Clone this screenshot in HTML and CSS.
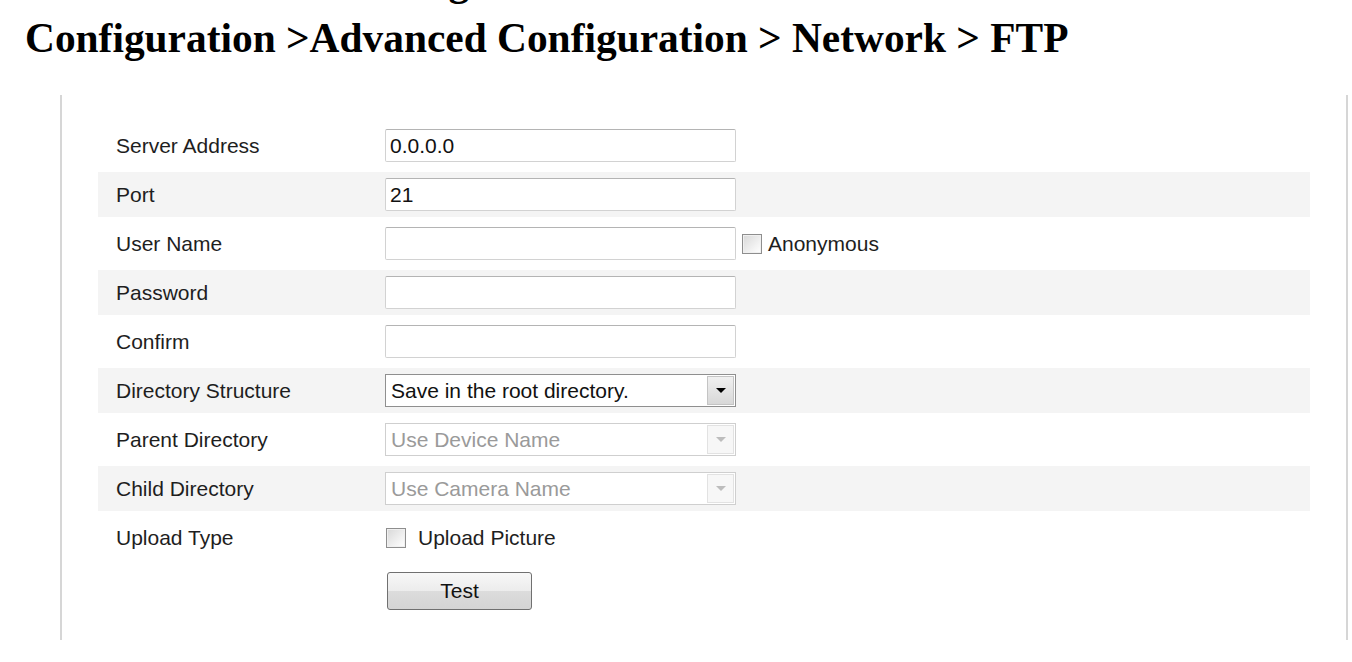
FILE: index.html
```html
<!DOCTYPE html>
<html>
<head>
<meta charset="utf-8">
<link rel="stylesheet" href="styles.css">
</head>
<body>
<div class="prev-line"><div class="prev-text">Setting</div></div>
<h1 class="crumb">Configuration &gt;Advanced Configuration &gt; Network &gt; FTP</h1>
<div class="panel">
  <div class="row">
    <div class="label">Server Address</div>
    <div class="field"><div class="input">0.0.0.0</div></div>
  </div>
  <div class="row alt">
    <div class="label">Port</div>
    <div class="field"><div class="input">21</div></div>
  </div>
  <div class="row">
    <div class="label">User Name</div>
    <div class="field">
      <div class="input"></div>
      <span class="check check-anon"></span>
      <span class="check-text">Anonymous</span>
    </div>
  </div>
  <div class="row alt">
    <div class="label">Password</div>
    <div class="field"><div class="input"></div></div>
  </div>
  <div class="row">
    <div class="label">Confirm</div>
    <div class="field"><div class="input"></div></div>
  </div>
  <div class="row alt">
    <div class="label">Directory Structure</div>
    <div class="field">
      <div class="select">
        <span class="select-text">Save in the root directory.</span>
        <span class="select-arrow"><span class="tri"></span></span>
      </div>
    </div>
  </div>
  <div class="row">
    <div class="label">Parent Directory</div>
    <div class="field">
      <div class="select disabled">
        <span class="select-text">Use Device Name</span>
        <span class="select-arrow"><span class="tri"></span></span>
      </div>
    </div>
  </div>
  <div class="row alt">
    <div class="label">Child Directory</div>
    <div class="field">
      <div class="select disabled">
        <span class="select-text">Use Camera Name</span>
        <span class="select-arrow"><span class="tri"></span></span>
      </div>
    </div>
  </div>
  <div class="row">
    <div class="label">Upload Type</div>
    <div class="field">
      <span class="check check-upload"></span>
      <span class="check-text upload-text">Upload Picture</span>
    </div>
  </div>
  <div class="button-row">
    <div class="btn">Test</div>
  </div>
</div>
</body>
</html>
```

FILE: styles.css
```css
html, body {
  margin: 0;
  padding: 0;
  background: #ffffff;
}

body {
  font-family: "Liberation Sans", Arial, sans-serif;
  color: #222222;
}

.prev-line {
  height: 6px;
  overflow: hidden;
  padding-left: 345px;
}

.prev-text {
  margin-top: -43px;
  font-family: "Liberation Serif", "Times New Roman", serif;
  font-weight: bold;
  font-size: 41.4px;
  line-height: 48px;
  color: #000;
}

.crumb {
  margin: 8px 0 0 0;
  padding-left: 25px;
  font-family: "Liberation Serif", "Times New Roman", serif;
  font-weight: bold;
  font-size: 41.4px;
  line-height: 48px;
  color: #000;
  white-space: nowrap;
}

.panel {
  margin: 33px 0 0 60px;
  width: 1288px;
  box-sizing: border-box;
  border-left: 2px solid #d6d6d6;
  border-right: 2px solid #d6d6d6;
  padding: 28px 36px 30px 36px;
}

.row {
  display: flex;
  align-items: center;
  height: 45px;
  margin-bottom: 4px;
}

.row.alt {
  background: #f4f4f4;
}

.label {
  width: 269px;
  padding-left: 18px;
  font-size: 21px;
  color: #1e1e1e;
  white-space: nowrap;
}

.field {
  display: flex;
  align-items: center;
}

.input {
  width: 351px;
  height: 33px;
  box-sizing: border-box;
  background: #fff;
  border: 1px solid #d2d2d2;
  border-top-color: #b4b4b4;
  border-radius: 2px;
  padding: 0 4px;
  font-size: 21px;
  line-height: 31px;
  color: #111;
}

.check {
  display: inline-block;
  width: 20px;
  height: 20px;
  box-sizing: border-box;
  border: 1px solid #8e8e8e;
  background: linear-gradient(135deg, #d8d8d8 0%, #f4f4f4 70%, #ffffff 100%);
  box-shadow: inset 0 0 0 1px #f0f0f0;
}

.check-anon {
  margin-left: 6px;
}

.check-upload {
  margin-left: 1px;
}

.check-text {
  margin-left: 6px;
  font-size: 21px;
  color: #1e1e1e;
}

.upload-text {
  margin-left: 12px;
}

.select {
  width: 351px;
  height: 33px;
  box-sizing: border-box;
  display: flex;
  align-items: stretch;
  border: 1px solid #8f8f8f;
  background: #fff;
}

.select-text {
  flex: 1;
  padding-left: 5px;
  font-size: 21px;
  line-height: 31px;
  color: #111;
}

.select-arrow {
  width: 25px;
  margin: 1px;
  display: flex;
  align-items: center;
  justify-content: center;
  border: 1px solid #c4c4c4;
  background: linear-gradient(#f0f0f0, #d8d8d8);
}

.tri {
  width: 0;
  height: 0;
  border-left: 5px solid transparent;
  border-right: 5px solid transparent;
  border-top: 5px solid #000;
}

.select.disabled {
  border-color: #cfcfcf;
}

.select.disabled .select-text {
  color: #9a9a9a;
}

.select.disabled .select-arrow {
  border-color: #e2e2e2;
  background: #f7f7f7;
}

.select.disabled .tri {
  border-top-color: #bdbdbd;
}

.button-row {
  padding-left: 289px;
  margin-top: 12px;
}

.btn {
  width: 145px;
  height: 38px;
  box-sizing: border-box;
  border: 1px solid #707070;
  border-radius: 3px;
  background: linear-gradient(#f7f7f7 0%, #ececec 50%, #dcdcdc 51%, #d4d4d4 100%);
  text-align: center;
  font-size: 21px;
  line-height: 36px;
  color: #111;
}
```
